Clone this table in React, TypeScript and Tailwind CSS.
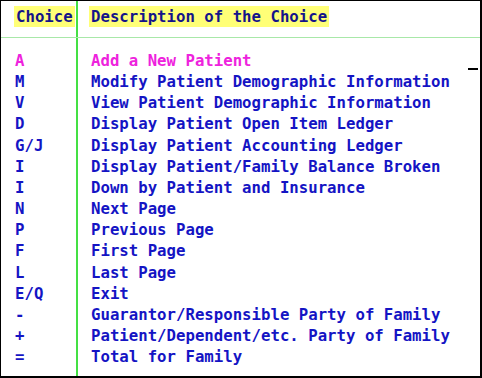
import React from "react";

const rows: [string, string, boolean?][] = [
  ["A", "Add a New Patient", true],
  ["M", "Modify Patient Demographic Information"],
  ["V", "View Patient Demographic Information"],
  ["D", "Display Patient Open Item Ledger"],
  ["G/J", "Display Patient Accounting Ledger"],
  ["I", "Display Patient/Family Balance Broken"],
  ["I", "Down by Patient and Insurance"],
  ["N", "Next Page"],
  ["P", "Previous Page"],
  ["F", "First Page"],
  ["L", "Last Page"],
  ["E/Q", "Exit"],
  ["-", "Guarantor/Responsible Party of Family"],
  ["+", "Patient/Dependent/etc. Party of Family"],
  ["=", "Total for Family"],
];

export default function App() {
  return (
    <div
      className="relative w-[482px] h-[378px] bg-white border-t border-l border-r-2 border-b-2 border-black flex flex-col overflow-hidden font-bold text-[15.7px]"
      style={{ fontFamily: '"DejaVu Sans Mono", "Liberation Mono", monospace' }}
    >
      <div className="flex h-[37px] border-b border-[#a8e8a8]">
        <div className="w-[77px] border-r-2 border-[#44e044] flex items-start pl-[13px] pt-[5px]">
          <span className="bg-[#ffff77] text-[#14148a] px-[2px] leading-[21px]">Choice</span>
        </div>
        <div className="flex-1 flex items-start pl-[11px] pt-[5px]">
          <span className="bg-[#ffff77] text-[#14148a] px-[2px] leading-[21px]">
            Description of the Choice
          </span>
        </div>
      </div>
      <div className="flex flex-1">
        <div className="w-[77px] border-r-2 border-[#44e044] pl-[14px] pt-[12px] leading-[21.15px]">
          {rows.map(([c, , pink], i) => (
            <div key={i} className={pink ? "text-[#ee22dd]" : "text-[#1414c4]"}>
              {c}
            </div>
          ))}
        </div>
        <div className="flex-1 pl-[13px] pt-[12px] leading-[21.15px] whitespace-pre">
          {rows.map(([, d, pink], i) => (
            <div key={i} className={pink ? "text-[#ee22dd]" : "text-[#1414c4]"}>
              {d}
            </div>
          ))}
        </div>
      </div>
      <div className="absolute left-[467px] top-[67px] w-[10px] h-[2px] bg-black" />
    </div>
  );
}
